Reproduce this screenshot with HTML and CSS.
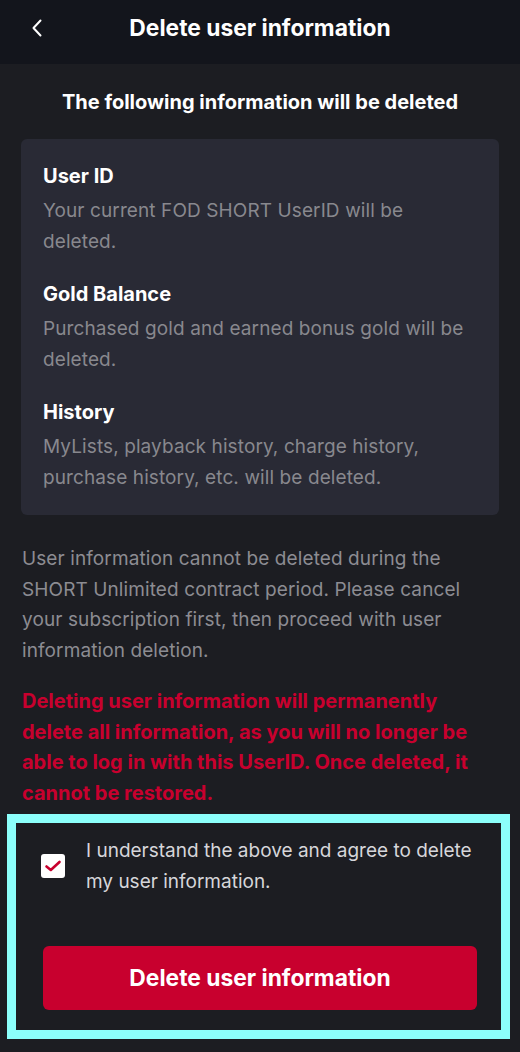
FILE: index.html
```html
<!DOCTYPE html>
<html lang="en">
<head>
<meta charset="utf-8">
<title>Delete user information</title>
<link rel="stylesheet" href="styles.css">
</head>
<body>
<header class="topbar">
  <button class="back" aria-label="Back">
    <svg width="12" height="18" viewBox="0 0 12 18"><path d="M9.5 1.5 L2.5 9 L9.5 16.5" fill="none" stroke="#ffffff" stroke-width="2" stroke-linecap="round" stroke-linejoin="round"/></svg>
  </button>
  <h1 class="title">Delete user information</h1>
</header>
<main class="content">
  <h2 class="subtitle">The following information will be deleted</h2>
  <section class="card">
    <div class="item">
      <h3 class="item-title">User ID</h3>
      <p class="item-desc">Your current FOD SHORT UserID will be deleted.</p>
    </div>
    <div class="item">
      <h3 class="item-title">Gold Balance</h3>
      <p class="item-desc">Purchased gold and earned bonus gold will be deleted.</p>
    </div>
    <div class="item">
      <h3 class="item-title">History</h3>
      <p class="item-desc">MyLists, playback history, charge history, purchase history, etc. will be deleted.</p>
    </div>
  </section>
  <p class="note">User information cannot be deleted during the SHORT Unlimited contract period. Please cancel your subscription first, then proceed with user information deletion.</p>
  <p class="warning">Deleting user information will permanently delete all information, as you will no longer be able to log in with this UserID. Once deleted, it cannot be restored.</p>
</main>
<section class="confirm">
  <label class="agree">
    <span class="checkbox">
      <svg width="18" height="14" viewBox="0 0 18 14"><path d="M2.5 7.5 L6.8 11 L15.5 3" fill="none" stroke="#c8002e" stroke-width="2.6" stroke-linecap="round" stroke-linejoin="round"/></svg>
    </span>
    <span class="agree-text">I understand the above and agree to delete my user information.</span>
  </label>
  <button class="delete-btn">Delete user information</button>
</section>
</body>
</html>
```

FILE: styles.css
```css
* { box-sizing: border-box; }
html, body { margin: 0; padding: 0; }
body {
  background: #1c1d22;
  font-family: Inter, "Noto Sans", sans-serif;
  color: #ffffff;
  width: 520px;
  min-height: 1052px;
}
.topbar {
  height: 64px;
  background: #13151c;
  display: flex;
  align-items: center;
  justify-content: center;
  position: relative;
}
.back {
  position: absolute;
  left: 31px;
  top: 19px;
  width: 12px;
  height: 18px;
  padding: 0;
  border: 0;
  background: none;
  display: flex;
}
.title {
  margin: 0;
  font-size: 22.8px;
  font-weight: 700;
  line-height: 30px;
  margin-top: -8px;
}
.content {
  padding: 0 22px 0 22px;
}
.subtitle {
  margin: 23px 0 22px;
  text-align: center;
  font-size: 20px;
  font-weight: 700;
  line-height: 30px;
}
.card {
  background: #292a35;
  border-radius: 6px;
  padding: 22px 22px 22px;
  margin: 0 -1px;
  display: flex;
  flex-direction: column;
  gap: 22px;
}
.item-title {
  margin: 0 0 5px;
  font-size: 20px;
  font-weight: 700;
  line-height: 30px;
}
.item-desc {
  margin: 0;
  font-size: 19px;
  letter-spacing: 0.1px;
  line-height: 30.5px;
  color: #88888e;
}
.note {
  margin: 29px 0 0;
  font-size: 19px;
  letter-spacing: 0.1px;
  line-height: 30.7px;
  color: #8c8c92;
}
.warning {
  margin: 19px 0 0;
  font-size: 20px;
  font-weight: 700;
  line-height: 30.7px;
  color: #c8002e;
}
.confirm {
  margin: 5px 10px 0 7px;
  border: 9px solid #8cfffb;
  padding: 12px 24px 20px 25px;
}
.agree {
  display: flex;
  align-items: center;
  gap: 21px;
  margin-right: -16px;
}
.checkbox {
  flex: 0 0 24px;
  width: 24px;
  height: 24px;
  background: #ffffff;
  border-radius: 3px;
  display: flex;
  align-items: center;
  justify-content: center;
}
.agree-text {
  font-size: 19px;
  line-height: 31px;
  color: #d6d6da;
}
.delete-btn {
  display: block;
  width: 434px;
  height: 64px;
  margin: 49px 0 0 2px;
  border: 0;
  border-radius: 6px;
  background: #c8002e;
  color: #ffffff;
  font-family: Inter, "Noto Sans", sans-serif;
  font-size: 22.8px;
  font-weight: 700;
}
```
